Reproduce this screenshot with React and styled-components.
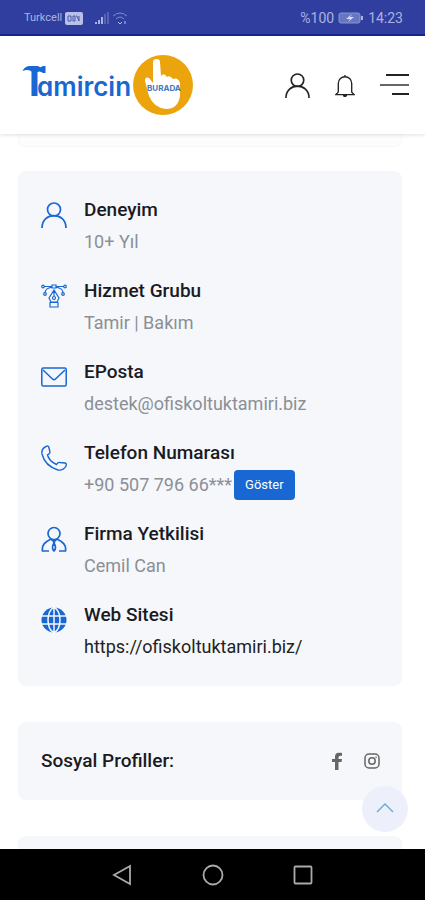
import React from "react";
import styled, { createGlobalStyle } from "styled-components";

const Global = createGlobalStyle`
  * { box-sizing: border-box; }
  body { margin: 0; background: #fff; font-family: Roboto, "Noto Sans", sans-serif; color: #1b1b1f; }
  h2, p, dl, dt, dd { margin: 0; }
  button { font-family: inherit; cursor: pointer; }
`;
const Screen = styled.div`
  height: 100vh;
  display: grid;
  grid-template-rows: auto auto 1fr auto;
  position: relative;
`;
const StatusBar = styled.div`
  height: 36px;
  padding: 1px 22px 0 24px;
  display: flex;
  align-items: center;
  justify-content: space-between;
  background: #303f9f;
  border-bottom: 2px solid #1a2590;
  color: #a9b2e0;
  font-size: 14px;
`;
const StatusGroup = styled.div`
  display: flex;
  align-items: center;
  gap: ${(p) => p.$gap}px;
`;
const Carrier = styled.span`
  font-size: 11px;
`;
const Header = styled.header`
  height: 98px;
  padding: 0 15px 0 22px;
  display: flex;
  align-items: center;
  justify-content: space-between;
  background: #fff;
  box-shadow: 0 1px 4px rgba(0, 0, 0, 0.13);
  z-index: 1;
`;
const LogoLink = styled.a`
  display: flex;
`;
const Actions = styled.nav`
  display: flex;
  align-items: center;
  gap: 25px;
`;
const IconButton = styled.button`
  display: flex;
  padding: 0;
  border: 0;
  background: none;
  color: #222;
`;
const Main = styled.main`
  overflow: hidden;
  padding: 0 23px 0 18px;
`;
const CardEdge = styled.div`
  height: 13px;
  margin-bottom: 24px;
  border: 1px solid #f7f7f8;
  border-top: 0;
  border-radius: 0 0 8px 8px;
  background: #fdfdfd;
`;
const Card = styled.section`
  background: #f5f7fb;
  border-radius: 8px;
  margin-bottom: 36px;
`;
const Details = styled(Card).attrs({ as: "dl" })`
  display: grid;
  gap: 18px;
  padding: 23px 23px 24px;
`;
const Row = styled.div`
  display: grid;
  grid-template-columns: 26px 1fr;
  column-gap: 17px;
`;
const RowIcon = styled.span`
  grid-row: span 2;
  padding-top: 8px;
  display: flex;
  align-items: flex-start;
  color: #1967d2;
`;
const Title = styled.dt`
  font-size: 19px;
  font-weight: 500;
  line-height: 32px;
`;
const Value = styled.dd`
  height: 31px;
  display: flex;
  align-items: center;
  gap: 2px;
  font-size: 18px;
  line-height: 31px;
  color: #8b8f96;
`;
const SiteLink = styled.a`
  color: #222;
  text-decoration: none;
`;
const ShowButton = styled.button`
  height: 30px;
  padding: 0 11px;
  border: 0;
  border-radius: 4px;
  background: #1967d2;
  color: #fff;
  font-size: 13px;
`;
const Social = styled(Card)`
  height: 78px;
  padding: 0 22px 0 23px;
  display: flex;
  align-items: center;
  justify-content: space-between;
`;
const SocialTitle = styled.h2`
  font-size: 19px;
  font-weight: 500;
  line-height: 32px;
`;
const SocialLinks = styled.div`
  display: flex;
  align-items: center;
  gap: 21px;
`;
const SocialLink = styled.a`
  display: flex;
  color: #666;
`;
const NextCard = styled(Card)`
  height: 80px;
`;
const ToTop = styled.button`
  position: absolute;
  right: 17px;
  bottom: 68px;
  width: 46px;
  height: 46px;
  display: flex;
  align-items: center;
  justify-content: center;
  padding: 0 0 2px;
  border: 0;
  border-radius: 50%;
  background: #edf0fb;
  color: #6fb0d2;
`;
const SystemNav = styled.nav`
  height: 51px;
  display: flex;
  align-items: center;
  justify-content: center;
  gap: 68px;
  background: #000;
`;
const NavButton = styled(IconButton)`
  color: #aaa;
`;
const Wordmark = styled.text`
  font-family: Inter, sans-serif;
  font-size: 26px;
  font-weight: 600;
  font-feature-settings: "cv11";
  fill: #1967d2;
`;
const BadgeText = styled.text`
  font-family: Inter, sans-serif;
  font-size: 8px;
  font-weight: 700;
  fill: #3f78c2;
`;

const stroke = { fill: "none", stroke: "currentColor" };

const Logo = () => (
  <svg width="172" height="64" viewBox="22 54 172 64" role="img" aria-label="Tamircin Burada">
    <path d="M22.500 72 Q25 67 30 67 H38 Q40 69 42 67.500 L43 67 H45.500 V74 H43 Q40 71.500 37.500 73 V97 H31.500 V72.500 Q28 70 22.500 72Z" fill="#1967d2" />
    <Wordmark x="37" y="97">amircin</Wordmark>
    <circle cx="163" cy="86" r="30" fill="#eba40c" />
    <path d="M153 63 Q153 60 156.500 60 Q160 60 160 63 L161 77 Q164 73 167 78 Q170 76 173 80 Q178 78 180 84 V97 Q178 110 166 110 Q154 109 149 97 L145 82 Q145 77 149 79 L153 84Z" fill="#fff" />
    <BadgeText x="147" y="92">BURADA</BadgeText>
  </svg>
);
const Person = ({ size }) => (
  <svg width={size} height={size} viewBox="0 0 26 26" strokeWidth="1.700" {...stroke}>
    <circle cx="13" cy="7.500" r="6.500" />
    <path d="M1 26 C1 9.500 25 9.500 25 26" />
  </svg>
);
const Bell = () => (
  <svg width="20" height="23" viewBox="1 0 20 24" strokeWidth="1.400" {...stroke}>
    <path d="M11 1V3M4 19V10C4 0.500 18 0.500 18 10V19L20.500 21.500H1.500L4 19" />
    <path d="M9.500 22a1.500 1.500 0 0 0 3 0Z" fill="currentColor" />
  </svg>
);
const Menu = () => (
  <svg width="30" height="24" viewBox="0 0 30 24" strokeWidth="2" {...stroke}>
    <path d="M6 2H29M12 21H29" />
    <path d="M0 12H29" stroke="#666" />
  </svg>
);
const PenTool = () => (
  <svg width="26" height="26" viewBox="0 -2 26 26" strokeWidth="1.200" {...stroke}>
    <path d="M3 1.500H11M15 1.500H23M11 0H15V3H11ZM11 2C7 3 4 4 4 8M15 2C19 3 22 4 22 8" />
    <circle cx="2" cy="1.500" r="1.300" /><circle cx="24" cy="1.500" r="1.300" />
    <circle cx="4" cy="9" r="1.300" /><circle cx="22" cy="9" r="1.300" />
    <path d="M13 5L8 13L10 17H16L18 13ZM13 5V11M9 17.500H17V22H9Z" />
    <circle cx="13" cy="13" r="1.500" />
  </svg>
);
const Mail = () => (
  <svg width="26" height="26" viewBox="0 -3 26 26" strokeWidth="1.500" {...stroke}>
    <rect x="0.800" y="1" width="24.400" height="18" rx="1.500" />
    <path d="M2 3L11.500 12Q13 13.500 14.500 12L24 3" />
  </svg>
);
const Phone = () => (
  <svg width="26" height="26" viewBox="0 0 26 26" strokeWidth="1.400" {...stroke}>
    <path d="M5 1.500Q7.500 0 8 3L9 7Q9 9 6.500 10Q8 16 15.500 19.500Q17 17 19 17.500L24 18Q26 18.500 25 21Q22 26 17 25Q4 21 1 9Q0 4 5 1.500Z" />
  </svg>
);
const Officer = () => (
  <svg width="26" height="26" viewBox="0 0 26 26" strokeWidth="1.700" {...stroke}>
    <circle cx="13" cy="7.500" r="6" />
    <path d="M8 25H1.500C0.500 19 4 16 10 13M18 25H24.500C25.500 19 22 16 16 13" />
    <path d="M10 13Q13 15 13 17Q13 15 16 13M13 17Q10 22 13 25Q16 22 13 17Z" />
  </svg>
);
const Globe = () => (
  <svg width="26" height="26" viewBox="0 0 26 26">
    <circle cx="13" cy="13" r="12.500" fill="currentColor" />
    <path d="M0 9H26M0 17H26M13 0V26M13 0C5 5 5 21 13 26M13 0C21 5 21 21 13 26" fill="none" stroke="#f5f7fb" strokeWidth="1.500" />
  </svg>
);

const rows = [
  { icon: <Person size={26} />, title: "Deneyim", value: "10+ Yıl" },
  { icon: <PenTool />, title: "Hizmet Grubu", value: "Tamir | Bakım" },
  { icon: <Mail />, title: "EPosta", value: "destek@ofiskoltuktamiri.biz" },
  { icon: <Phone />, title: "Telefon Numarası", value: <><span>+90 507 796 66***</span><ShowButton>Göster</ShowButton></> },
  { icon: <Officer />, title: "Firma Yetkilisi", value: "Cemil Can" },
  { icon: <Globe />, title: "Web Sitesi", value: <SiteLink href="https://ofiskoltuktamiri.biz/">https://ofiskoltuktamiri.biz/</SiteLink> },
];

export default function App() {
  return (
    <Screen>
      <Global />
      <StatusBar>
        <StatusGroup $gap={3}>
          <Carrier>Turkcell</Carrier>
          <svg width="66" height="16" viewBox="0 0 66 16">
            <rect x="0" y="2" width="18" height="13" rx="2" fill="#b8c0e8" />
            <path d="M3 6h3v5H3zM8 6h2v5H8zM11 6h1l2 5M14 6v5" stroke="#4a57aa" fill="none" />
            <path d="M31 14V12M34 14V10M37 14V7" stroke="#a9b2e0" strokeWidth="2" />
            <path d="M40 14V4M43 14V2" stroke="#5663b3" strokeWidth="2" />
            <path d="M48 6Q55 0 62 6M51 9Q55 5 59 9" stroke="#7f8acb" fill="none" />
            <path d="M53 12L55 14L57 12M60 14V11" stroke="#b8c0e8" fill="none" />
          </svg>
        </StatusGroup>
        <StatusGroup $gap={4}>
          <span>%100</span>
          <svg width="26" height="14" viewBox="0 0 26 14">
            <rect x="1" y="2" width="21" height="10" rx="2" fill="#6876c0" stroke="#8994d0" />
            <path d="M24 5V9" stroke="#a9b2e0" strokeWidth="2" />
            <path d="M14 3L8 8H12L10 11L16 6H12Z" fill="#d5daf5" />
          </svg>
          <span>14:23</span>
        </StatusGroup>
      </StatusBar>
      <Header>
        <LogoLink href="#"><Logo /></LogoLink>
        <Actions>
          <IconButton aria-label="Hesap"><Person size={25} /></IconButton>
          <IconButton aria-label="Bildirimler"><Bell /></IconButton>
          <IconButton aria-label="Menü"><Menu /></IconButton>
        </Actions>
      </Header>
      <Main>
        <CardEdge />
        <Details>
          {rows.map((r) => (
            <Row key={r.title}>
              <RowIcon>{r.icon}</RowIcon>
              <Title>{r.title}</Title>
              <Value>{r.value}</Value>
            </Row>
          ))}
        </Details>
        <Social>
          <SocialTitle>Sosyal Profiller:</SocialTitle>
          <SocialLinks>
            <SocialLink href="#" aria-label="Facebook">
              <svg width="12" height="18" viewBox="0 0 12 18"><path d="M4 18V10H1V7H4V5C4 1 6 0 11 1V4C8 3.500 7.500 4 7.500 7H11L10.500 10H7.500V18Z" fill="currentColor" /></svg>
            </SocialLink>
            <SocialLink href="#" aria-label="Instagram">
              <svg width="16" height="16" viewBox="0 0 16 16" strokeWidth="1.500" {...stroke}><rect x="1" y="1" width="14" height="14" rx="4" /><circle cx="8" cy="8" r="3.200" /><path d="M11.500 4.200H12.700" /></svg>
            </SocialLink>
          </SocialLinks>
        </Social>
        <NextCard />
      </Main>
      <SystemNav>
        <NavButton aria-label="Geri"><svg width="22" height="22" viewBox="0 0 22 22" strokeWidth="1.800" {...stroke}><path d="M18 2V20L2 11Z" /></svg></NavButton>
        <NavButton aria-label="Ana ekran"><svg width="22" height="22" viewBox="0 0 22 22" strokeWidth="1.800" {...stroke}><circle cx="11" cy="11" r="9.500" /></svg></NavButton>
        <NavButton aria-label="Son uygulamalar"><svg width="22" height="22" viewBox="0 0 22 22" strokeWidth="1.800" {...stroke}><rect x="2.500" y="2.500" width="17" height="17" rx="1" /></svg></NavButton>
      </SystemNav>
      <ToTop aria-label="Yukarı çık"><svg width="18" height="10" viewBox="0 0 18 10" strokeWidth="1.500" {...stroke}><path d="M1 9L9 1L17 9" /></svg></ToTop>
    </Screen>
  );
}
